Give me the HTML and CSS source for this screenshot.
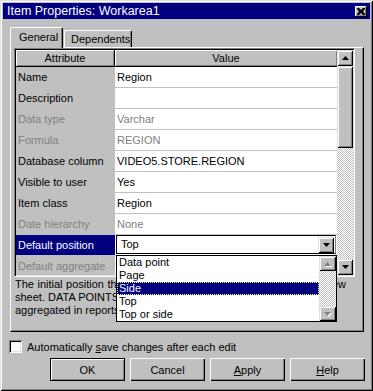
FILE: index.html
```html
<!DOCTYPE html>
<html lang="en">
<head>
    <meta charset="UTF-8">
    <title>Item Properties: Workarea1</title>
    <link rel="stylesheet" href="styles.css">
</head>
<body>
    <div class="window">
        <div class="titlebar">
            <span class="title">Item Properties: Workarea1</span>
            <span class="close">
                <svg width="8" height="7" viewBox="0 0 8 7"><path d="M0 0h2l2 2 2-2h2v1L6 3.5 8 6v1H6L4 5 2 7H0V6l2-2.5L0 1z" fill="#000"/></svg>
            </span>
        </div>

        <div class="tabs">
            <div class="tab active">General</div>
            <div class="tab">Dependents</div>
        </div>

        <div class="panel">
            <div class="grid">
                <div class="grid-body">
                    <div class="row head">
                        <div class="hcell">Attribute</div>
                        <div class="hcell">Value</div>
                    </div>
                    <div class="row"><div class="attr">Name</div><div class="val">Region</div></div>
                    <div class="row"><div class="attr">Description</div><div class="val"></div></div>
                    <div class="row off"><div class="attr">Data type</div><div class="val">Varchar</div></div>
                    <div class="row off"><div class="attr">Formula</div><div class="val">REGION</div></div>
                    <div class="row"><div class="attr">Database column</div><div class="val">VIDEO5.STORE.REGION</div></div>
                    <div class="row"><div class="attr">Visible to user</div><div class="val">Yes</div></div>
                    <div class="row"><div class="attr">Item class</div><div class="val">Region</div></div>
                    <div class="row off"><div class="attr">Date hierarchy</div><div class="val">None</div></div>
                    <div class="row selected">
                        <div class="attr">Default position</div>
                        <div class="val">
                            <div class="combo">
                                <span>Top</span>
                                <span class="combo-btn"><svg width="7" height="4" viewBox="0 0 7 4"><path d="M0 0h7L3.5 4z" fill="#000"/></svg></span>
                            </div>
                        </div>
                    </div>
                    <div class="row off"><div class="attr">Default aggregate</div><div class="val">Sum</div></div>
                </div>
                <div class="vscroll">
                    <span class="sbtn"><svg width="7" height="4" viewBox="0 0 7 4"><path d="M3.5 0L7 4H0z" fill="#000"/></svg></span>
                    <span class="thumb"></span>
                    <span class="track"></span>
                    <span class="sbtn"><svg width="7" height="4" viewBox="0 0 7 4"><path d="M0 0h7L3.5 4z" fill="#000"/></svg></span>
                </div>
            </div>
            <div class="help">
                <span class="line fill">The initial position that the item occupies when it is added to a new</span>
                <span class="line">sheet. DATA POINTS are placed in the body of the sheet and are</span>
                <span class="line">aggregated in reports, other items become axis items.</span>
            </div>
        </div>

        <label class="autosave">
            <span class="check"></span>
            <span>Automatically <u>s</u>ave changes after each edit</span>
        </label>

        <div class="buttons">
            <button class="btn default">OK</button>
            <button class="btn">Cancel</button>
            <button class="btn"><u>A</u>pply</button>
            <button class="btn"><u>H</u>elp</button>
        </div>

        <div class="droplist">
            <div class="items">
                <div class="item">Data point</div>
                <div class="item">Page</div>
                <div class="item current">Side</div>
                <div class="item">Top</div>
                <div class="item">Top or side</div>
            </div>
            <div class="vscroll small">
                <span class="sbtn off"><svg width="7" height="4" viewBox="0 0 7 4"><path d="M3.5 0L7 4H0z" fill="#808080"/></svg></span>
                <span class="track"></span>
                <span class="sbtn off"><svg width="7" height="4" viewBox="0 0 7 4"><path d="M0 0h7L3.5 4z" fill="#808080"/></svg></span>
            </div>
        </div>
    </div>
</body>
</html>
```

FILE: styles.css
```css
/* Win95 style property sheet */
* {
    box-sizing: border-box;
}

body {
    margin: 0;
    background: #c0c0c0;
    font-family: "Liberation Sans", Arial, sans-serif;
    font-size: 11px;
    color: #000;
}

.window {
    position: relative;
    width: 373px;
    height: 391px;
    padding: 3px;
    box-shadow: inset 1px 1px #dfdfdf, inset -1px -1px #000, inset 2px 2px #fff, inset -2px -2px #808080;
}

.titlebar {
    height: 16px;
    background: #000080;
    color: #fff;
    display: flex;
    align-items: center;
    justify-content: space-between;
    padding: 0 3px 0 4px;
}

.title {
    font-size: 12.5px;
}

.close {
    width: 12px;
    height: 11px;
    background: #c0c0c0;
    display: flex;
    align-items: center;
    justify-content: center;
    box-shadow: inset -1px -1px #000, inset 1px 1px #fff, inset -2px -2px #808080;
}

/* tabs */
.tabs {
    display: flex;
    align-items: flex-end;
    height: 20px;
    margin: 8px 0 0 7px;
}

.tab {
    position: relative;
    height: 17px;
    padding: 0 6px;
    line-height: 16px;
    background: #c0c0c0;
    border-top: 1px solid #fff;
    border-left: 1px solid #fff;
    border-right: 1px solid #000;
    border-radius: 2px 2px 0 0;
    box-shadow: inset -1px 0 #808080;
}

.tab.active {
    z-index: 1;
    width: 53px;
    height: 21px;
    margin-bottom: -1px;
    padding: 0 8px;
    line-height: 18px;
}

.tab + .tab {
    width: 68px;
    margin-left: 1px;
}

/* panel */
.panel {
    width: 354px;
    height: 285px;
    margin-left: 7px;
    padding: 0 0 0 3px;
    border: 1px solid;
    border-color: #fff #000 #000 #fff;
    box-shadow: inset -1px -1px #808080;
}

.grid {
    display: flex;
    width: 341px;
    height: 229px;
    border: 1px solid;
    border-color: #808080 #fff #fff #808080;
    box-shadow: inset 1px 1px #000, inset -1px -1px #dfdfdf;
    padding: 1px;
}

.grid-body {
    width: 321px;
    overflow: hidden;
    background: #fff;
}

.row {
    display: grid;
    grid-template-columns: 99px 222px;
    height: 21px;
}

.row.head {
    height: 17px;
}

.hcell {
    height: 17px;
    line-height: 16px;
    text-align: center;
    background: #c0c0c0;
    border-bottom: 1px solid #000;
    box-shadow: inset 1px 1px #fff, inset -1px -1px #808080;
}

.hcell:first-child {
    border-right: 1px solid #000;
}

.attr,
.val {
    height: 21px;
    line-height: 20px;
    padding-left: 2px;
    border-bottom: 1px solid #c0c0c0;
    white-space: nowrap;
}

.attr {
    background: #c0c0c0;
}

.val {
    background: #fff;
}

.off .attr,
.off .val {
    color: #808080;
}

.selected .attr {
    background: #000080;
    color: #fff;
}

.selected .val {
    padding-left: 1px;
}

.combo {
    display: flex;
    justify-content: space-between;
    align-items: center;
    width: 220px;
    height: 19px;
    padding: 0 1px 0 4px;
    border: 1px solid #000;
    border-right-color: #808080;
    background: #fff;
    line-height: 17px;
}

.combo-btn {
    width: 16px;
    height: 16px;
}

/* scrollbars */
.vscroll {
    display: flex;
    flex-direction: column;
    width: 16px;
}

.sbtn,
.combo-btn,
.thumb {
    display: flex;
    align-items: center;
    justify-content: center;
    background: #c0c0c0;
    box-shadow: inset 1px 1px #dfdfdf, inset -1px -1px #000, inset 2px 2px #fff, inset -2px -2px #808080;
}

.sbtn {
    height: 16px;
}

.thumb {
    height: 82px;
}

.track {
    flex: 1;
    background: repeating-conic-gradient(#c0c0c0 0 25%, #fff 0 50%) 0 0 / 2px 2px;
}

.sbtn.off svg {
    filter: drop-shadow(1px 1px 0 #fff);
}

.help {
    width: 331px;
    margin: 1px 0 0 1px;
    line-height: 13px;
    white-space: nowrap;
}

.line {
    display: block;
}

.line.fill {
    text-align: justify;
    text-align-last: justify;
}

/* bottom */
.autosave {
    display: flex;
    align-items: center;
    gap: 5px;
    margin: 8px 0 0 6px;
    height: 13px;
}

.check {
    width: 13px;
    height: 13px;
    background: #fff;
    box-shadow: inset 1px 1px #808080, inset -1px -1px #fff, inset 2px 2px #000, inset -2px -2px #dfdfdf;
}

.buttons {
    display: flex;
    justify-content: flex-end;
    gap: 5px;
    margin: 5px 5px 0 0;
}

.btn {
    width: 75px;
    height: 23px;
    padding: 0;
    border: none;
    background: #c0c0c0;
    font: inherit;
    color: #000;
    box-shadow: inset 1px 1px #fff, inset -1px -1px #000, inset -2px -2px #808080;
}

.btn.default {
    box-shadow: inset 0 0 0 1px #000, inset 2px 2px #fff, inset -2px -2px #808080;
}

/* open combo list */
.droplist {
    position: absolute;
    left: 116px;
    top: 255px;
    display: flex;
    width: 221px;
    height: 67px;
    border: 1px solid #000;
    background: #fff;
}

.items {
    flex: 1;
}

.item {
    height: 13px;
    line-height: 13px;
    padding-left: 2px;
}

.item.current {
    background: #000080;
    color: #fff;
    outline: 1px dotted #ffff80;
    outline-offset: -1px;
}

.vscroll.small {
    width: 17px;
}

.vscroll.small .sbtn {
    height: 15px;
}
```
